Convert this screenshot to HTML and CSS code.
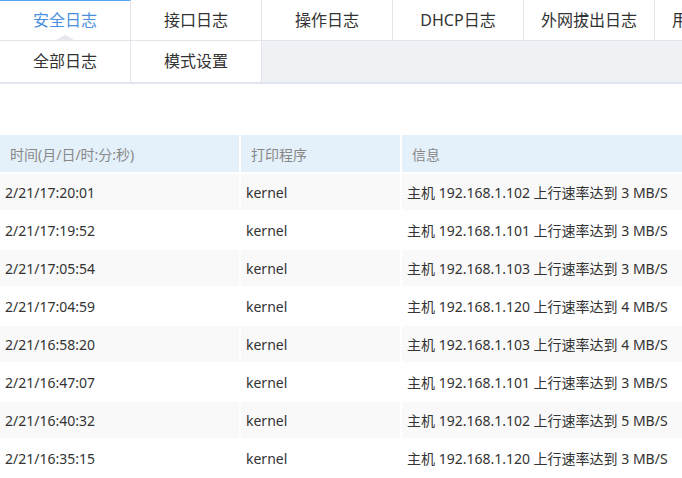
FILE: index.html
```html
<html lang="zh-CN"><head><meta http-equiv="Content-Type" content="text/html; charset=UTF-8">
  <link rel="stylesheet" href="styles.css">
</head>
<body>
<div class="tabs">
  <div class="tab-row">
    <div class="tab active">安全日志</div>
    <div class="tab">接口日志</div>
    <div class="tab">操作日志</div>
    <div class="tab">DHCP日志</div>
    <div class="tab">外网拔出日志</div>
    <div class="tab">用户流量日志</div>
  </div>
  <div class="tab-row sub">
    <div class="tab">全部日志</div>
    <div class="tab">模式设置</div>
  </div>
</div>

<table class="log-table">
  <thead>
    <tr><th class="c-time">时间(月/日/时:分:秒)</th><th class="c-prog">打印程序</th><th class="c-info">信息</th></tr>
  </thead>
  <tbody>
    <tr><td>2/21/17:20:01</td><td>kernel</td><td>主机 192.168.1.102 上行速率达到 3 MB/S</td></tr>
    <tr><td>2/21/17:19:52</td><td>kernel</td><td>主机 192.168.1.101 上行速率达到 3 MB/S</td></tr>
    <tr><td>2/21/17:05:54</td><td>kernel</td><td>主机 192.168.1.103 上行速率达到 3 MB/S</td></tr>
    <tr><td>2/21/17:04:59</td><td>kernel</td><td>主机 192.168.1.120 上行速率达到 4 MB/S</td></tr>
    <tr><td>2/21/16:58:20</td><td>kernel</td><td>主机 192.168.1.103 上行速率达到 4 MB/S</td></tr>
    <tr><td>2/21/16:47:07</td><td>kernel</td><td>主机 192.168.1.101 上行速率达到 3 MB/S</td></tr>
    <tr><td>2/21/16:40:32</td><td>kernel</td><td>主机 192.168.1.102 上行速率达到 5 MB/S</td></tr>
    <tr><td>2/21/16:35:15</td><td>kernel</td><td>主机 192.168.1.120 上行速率达到 3 MB/S</td></tr>
  </tbody>
</table>
</body>
</html>
```

FILE: styles.css
```css
body {
  margin: 0;
  font-family: "Noto Sans", "Noto Sans CJK SC", sans-serif;
  color: #333;
  background: #fff;
  overflow: hidden;
}

.tabs {
  background: #f0f1f5;
  border-bottom: 2px solid #dfe6f2;
  overflow: hidden;
}

.tab-row {
  display: flex;
  height: 40px;
  border-bottom: 1px solid #e3e5ea;
}

.tab-row.sub {
  height: 41px;
  border-bottom: none;
}

.tab {
  flex: 0 0 130px;
  border-right: 1px solid #e3e5ea;
  background: #fff;
  font-size: 16px;
  line-height: 40px;
  text-align: center;
  position: relative;
  white-space: nowrap;
}

.tab.active {
  color: #4a8fe0;
  border-top: 1px solid #5aa4f0;
  line-height: 39px;
}

.tab.active:after {
  content: "";
  position: absolute;
  left: 56px;
  bottom: 0;
  border-left: 9px solid transparent;
  border-right: 9px solid transparent;
  border-bottom: 5px solid #e6e8ed;
}

.log-table {
  margin-top: 49px;
  margin-left: -2px;
  width: 706px;
  table-layout: fixed;
  border-collapse: separate;
  border-spacing: 2px;
  font-size: 14px;
}

.log-table th {
  background: #e4f0fa;
  color: #888;
  font-weight: normal;
  text-align: left;
  height: 37px;
  padding: 0 0 0 10px;
}

.c-time { width: 229px; }
.c-prog { width: 149px; }
.c-info { width: 290px; }

.log-table td {
  height: 36px;
  padding: 0 0 0 5px;
  white-space: nowrap;
}

.log-table tbody tr:nth-child(odd) td {
  background: #f9f9f9;
}
```
